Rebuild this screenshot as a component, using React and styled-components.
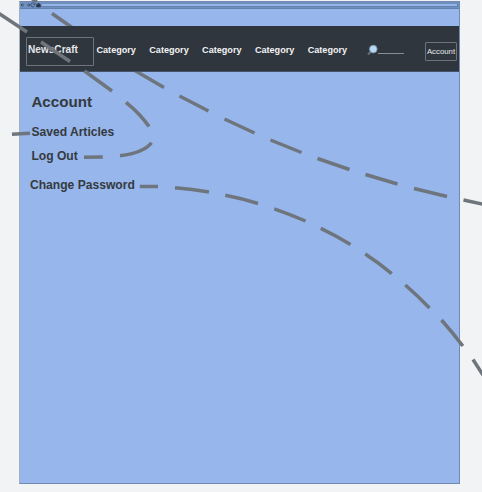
import React from 'react';
import styled, { createGlobalStyle } from 'styled-components';

const GlobalStyle = createGlobalStyle`
  * { box-sizing: border-box; }
  body { margin: 0; background: #f1f3f5; font-family: "Liberation Sans", Arial, sans-serif; }
`;

const Canvas = styled.main`
  position: relative;
  width: 482px;
  height: 492px;
  padding: 1px 21px 8px 19px;
  overflow: hidden;
  background: #f1f3f5;
`;

const Window = styled.section`
  display: flex;
  flex-direction: column;
  width: 441px;
  height: 483px;
  background: #97b6eb;
  border: 1px solid #7189b4;
  border-left-color: #a5afbd;
`;

const BrowserBar = styled.div`
  display: flex;
  align-items: center;
  height: 7px;
  flex: none;
  background: #6f8fbe;
  border-bottom: 1px solid #6481ae;
`;

const BrowserIcons = styled.svg`
  width: 22px;
  height: 6px;
  flex: none;
`;

const AddressField = styled.div`
  flex: 1;
  height: 3px;
  margin-right: 1px;
  background: #94b5e8;
  border: solid #6481ae;
  border-width: 0 1px 1px 0;
`;

const Nav = styled.nav`
  position: relative;
  z-index: 1;
  display: flex;
  align-items: flex-start;
  height: 46px;
  flex: none;
  margin-top: 17px;
  padding-left: 6px;
  background: #30363d;
  border-bottom: 1px solid #46546b;
`;

const Brand = styled.div`
  width: 68px;
  height: 29px;
  margin-top: 11px;
  padding: 5px 0 0 1px;
  border: 1px solid #6d737b;
  border-radius: 1px;
  color: #e5e8eb;
  font-weight: 700;
  font-size: 10.1px;
  line-height: 14px;
`;

const Categories = styled.div`
  display: grid;
  grid-template-columns: repeat(5, 52.8px);
  margin: 19px 0 0 2.5px;
`;

const Category = styled.span`
  color: #f2f3f4;
  font-size: 9.1px;
  font-weight: 700;
  line-height: 11px;
`;

const Search = styled.div`
  display: flex;
  width: 50px;
  height: 13px;
  margin: 18px 0 0 6.5px;
`;

const SearchIcon = styled.svg`
  width: 12px;
  height: 13px;
  flex: none;
`;

const SearchLine = styled.div`
  width: 26px;
  height: 10px;
  margin-left: -1px;
  border-bottom: 1px solid #858c93;
`;

const AccountButton = styled.button`
  display: flex;
  align-items: center;
  justify-content: center;
  width: 32px;
  height: 19px;
  margin: 16px 0 0 8px;
  padding: 0;
  background: none;
  border: 1px solid #6d737b;
  border-radius: 1px;
  color: #e7eaed;
  font: 7.8px/17px "Liberation Sans", Arial, sans-serif;
  white-space: nowrap;
`;

const AccountPanel = styled.div`
  display: flex;
  flex-direction: column;
  padding: 19px 0 0 11.4px;
`;

const Title = styled.h1`
  margin: 0;
  color: #343a40;
  font-size: 15.2px;
  line-height: 22px;
`;

const MenuItem = styled.span`
  height: 14px;
  margin-top: ${({ $gap }) => $gap}px;
  margin-left: ${({ $shift }) => $shift || 0}px;
  color: #343a40;
  font-size: 12.1px;
  font-weight: 700;
  line-height: 14px;
`;

const Connectors = styled.svg`
  position: absolute;
  inset: 0;
  z-index: ${({ $front }) => ($front ? 2 : 0)};
  width: 482px;
  height: 492px;
  pointer-events: none;
  fill: none;
  stroke: #6f757d;
  stroke-width: 3.5;
`;

const rearPath = 'M32 -1L37 1.5M52 13.5L72 27.5M134 70L164 87.5M179.5 96L208.5 111M224.5 119L254.5 133M270.5 140L301.5 152.5M317.5 158.5L349.5 169.5M365.5 174.5L397.5 184M414 188.5L447 196.5M463.5 200L483 204.3';
const brandPath = 'M-1 13.5L27 32M41 42L70 61.5M84.5 71L112 91M126 102.3Q140.5 114 149 126.5M151.5 142.8Q144 152.7 120 155.8M102.8 157L84 157.3M12 134.3L30 133.3';
const passwordPath = 'M139.8 186.5H158M175 187.8Q192 189 209 192M225.3 195.3Q242 198.5 258 203.5M274.3 208.8Q290 214.3 305.5 221M320.8 228.3Q336 235.5 350.5 244.5M365.3 254Q379 263 391.7 273.7M405.3 285Q418 296 429.5 308M441.5 320Q453 333 462.8 346M473 359.5L483 375';

export default function App() {
  return (
    <>
      <GlobalStyle />
      <Canvas>
        <Window>
          <BrowserBar>
            <BrowserIcons viewBox="0 0 22 6" fill="none" stroke="#2f415c" strokeWidth=".7">
              <path d="M4 3H1L2.5 1.5M1 3L2.5 4.5M7 3H10L8.5 1.5M10 3L8.5 4.5M14.6 2A2 2 0 1 0 14.5 4M15 1V2.5H13.5" />
              <path d="M16.5 3L18.5 1L20.5 3V5H16.5Z" fill="#263449" />
            </BrowserIcons>
            <AddressField />
          </BrowserBar>
          <Nav>
            <Brand>NewsCraft</Brand>
            <Categories>
              {[1, 2, 3, 4, 5].map((id) => <Category key={id}>Category</Category>)}
            </Categories>
            <Search>
              <SearchIcon viewBox="0 0 12 13">
                <path d="M1 10.5L4 7.5" stroke="#64717d" strokeWidth="2" />
                <circle cx="6.3" cy="5.1" r="3.8" fill="#b8d9f4" stroke="#7897ae" strokeWidth="1" />
              </SearchIcon>
              <SearchLine />
            </Search>
            <AccountButton>Account</AccountButton>
          </Nav>
          <AccountPanel>
            <Title>Account</Title>
            <MenuItem $gap={12}>Saved Articles</MenuItem>
            <MenuItem $gap={10}>Log Out</MenuItem>
            <MenuItem $gap={15} $shift={-1.4}>Change Password</MenuItem>
          </AccountPanel>
        </Window>
        <Connectors viewBox="0 0 482 492"><path d={rearPath} /></Connectors>
        <Connectors $front viewBox="0 0 482 492"><path d={brandPath} /><path d={passwordPath} /></Connectors>
      </Canvas>
    </>
  );
}
